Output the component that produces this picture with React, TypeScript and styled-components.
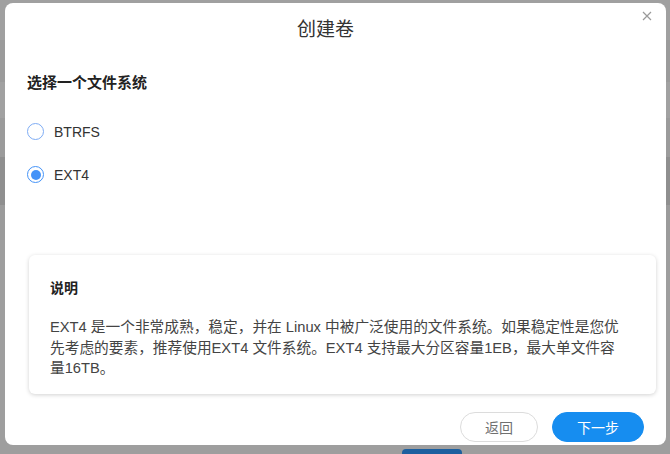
import React, { useState } from "react";
import styled, { createGlobalStyle } from "styled-components";

const Global = createGlobalStyle`
  html, body { margin: 0; padding: 0; }
  body {
    width: 670px;
    height: 454px;
    overflow: hidden;
    font-family: "Liberation Sans", "Noto Sans CJK SC", sans-serif;
    background: linear-gradient(
      to bottom,
      #a0a0a0 0px, #a0a0a0 40px,
      #9b9b9b 40px, #9b9b9b 82px,
      #a1a1a1 82px, #a1a1a1 118px,
      #9b9b9b 118px, #9b9b9b 157px,
      #8f8f8f 157px, #8f8f8f 205px,
      #9b9b9b 205px, #9b9b9b 240px,
      #9e9e9e 240px
    );
  }
`;

const Page = styled.div`
  display: flex;
  flex-direction: column;
  align-items: flex-start;
  padding: 3px 0 0 5px;
`;

const Dialog = styled.div`
  position: relative;
  width: 661px;
  height: 442px;
  background: #fff;
  border-radius: 8px;
  display: flex;
  flex-direction: column;
  box-sizing: border-box;
`;

const Header = styled.div`
  height: 54px;
  padding: 16px 20px 0 0;
  box-sizing: border-box;
  text-align: center;
`;

const Title = styled.h1`
  margin: 0;
  font-size: 19px;
  line-height: 22px;
  font-weight: 400;
  color: #333;
`;

const CloseButton = styled.button`
  position: absolute;
  top: 7px;
  right: 13px;
  width: 12px;
  height: 12px;
  padding: 0;
  border: none;
  background: none;
  display: flex;
  align-items: center;
  justify-content: center;
  cursor: pointer;
`;

const Body = styled.div`
  padding: 0 10px 0 22px;
`;

const SectionTitle = styled.h2`
  margin: 16px 0 0;
  font-size: 15px;
  line-height: 20px;
  font-weight: 700;
  color: #222;
`;

const RadioList = styled.div`
  margin-top: 17px;
  display: flex;
  flex-direction: column;
`;

const RadioRow = styled.label`
  height: 43px;
  display: flex;
  align-items: center;
  gap: 10px;
  cursor: pointer;
`;

const RadioCircle = styled.span<{ $checked: boolean }>`
  width: 17px;
  height: 17px;
  box-sizing: border-box;
  border-radius: 50%;
  border: 1.5px solid ${(p) => (p.$checked ? "#4493f8" : "#7eacf4")};
  display: flex;
  align-items: center;
  justify-content: center;
  &::after {
    content: "";
    width: 10px;
    height: 10px;
    border-radius: 50%;
    background: ${(p) => (p.$checked ? "#4493f8" : "transparent")};
  }
`;

const RadioLabel = styled.span`
  font-size: 14px;
  color: #333;
  line-height: 20px;
`;

const InfoCard = styled.div`
  margin: 59px 0 0 2px;
  width: 627px;
  height: 139px;
  box-sizing: border-box;
  padding: 23px 20px 0 21px;
  border-radius: 6px;
  background: #fff;
  box-shadow: 0 1px 4px rgba(0, 0, 0, 0.18);
`;

const CardTitle = styled.h3`
  margin: 0;
  font-size: 14px;
  line-height: 20px;
  font-weight: 700;
  color: #222;
`;

const CardText = styled.p`
  margin: 19px 0 0;
  width: 576px;
  font-size: 14.7px;
  line-height: 20.5px;
  color: #444;
`;

const Footer = styled.div`
  margin-top: 18px;
  padding-right: 22px;
  display: flex;
  justify-content: flex-end;
  gap: 14px;
`;

const Button = styled.button<{ $primary?: boolean; $w: number }>`
  width: ${(p) => p.$w}px;
  height: 30px;
  border-radius: 15px;
  font-family: inherit;
  font-size: 14px;
  cursor: pointer;
  border: 1px solid ${(p) => (p.$primary ? "#168df0" : "#dcdcdc")};
  background: ${(p) => (p.$primary ? "#168df0" : "#fff")};
  color: ${(p) => (p.$primary ? "#fff" : "#707070")};
`;

const BehindBar = styled.div`
  margin: 4px 0 0 397px;
  width: 60px;
  height: 10px;
  border-radius: 4px 4px 0 0;
  background: #1d5f9f;
`;

const options = ["BTRFS", "EXT4"];

export default function App() {
  const [value, setValue] = useState("EXT4");
  return (
    <>
      <Global />
      <Page>
        <Dialog>
          <Header>
            <Title>创建卷</Title>
          </Header>
          <CloseButton aria-label="close">
            <svg width="10" height="10" viewBox="0 0 10 10">
              <path d="M1 1L9 9M9 1L1 9" stroke="#9a9a9a" strokeWidth="1.2" />
            </svg>
          </CloseButton>
          <Body>
            <SectionTitle>选择一个文件系统</SectionTitle>
            <RadioList>
              {options.map((o) => (
                <RadioRow key={o} onClick={() => setValue(o)}>
                  <RadioCircle $checked={value === o} />
                  <RadioLabel>{o}</RadioLabel>
                </RadioRow>
              ))}
            </RadioList>
            <InfoCard>
              <CardTitle>说明</CardTitle>
              <CardText>
                EXT4 是一个非常成熟，稳定，并在 Linux 中被广泛使用的文件系统。如果稳定性是您优先考虑的要素，推荐使用EXT4 文件系统。EXT4 支持最大分区容量1EB，最大单文件容量16TB。
              </CardText>
            </InfoCard>
          </Body>
          <Footer>
            <Button $w={78}>返回</Button>
            <Button $w={92} $primary>
              下一步
            </Button>
          </Footer>
        </Dialog>
        <BehindBar />
      </Page>
    </>
  );
}
